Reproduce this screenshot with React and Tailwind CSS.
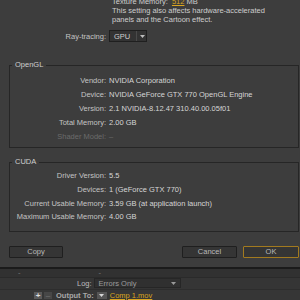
const font = { fontFamily: '"Liberation Sans", Arial, sans-serif' };

function Row({ label, value, dim, h = 'h-[14px]' }) {
  return (
    <div className={`flex items-center ${h}`}>
      <span className={`w-[96px] shrink-0 text-right ${dim ? 'text-[#6b6b6b]' : 'text-[#c4c4c4]'}`}>{label}:</span>
      <span className={`ml-[3px] whitespace-nowrap ${dim ? 'text-[#6b6b6b]' : 'text-[#d6d6d6]'}`}>{value}</span>
    </div>
  );
}

function Group({ title, children, className }) {
  return (
    <div className={`ml-[9px] w-[290px] border border-[#262626] ${className}`}>
      <div className="ml-[2px] -mt-[6px] w-fit bg-[#3d3d3d] px-[3px] leading-[10px] text-[#cfcfcf]">{title}</div>
      {children}
    </div>
  );
}

function Button({ children, ok, className }) {
  return (
    <div
      className={`flex h-[12px] items-center justify-center rounded-[1px] border bg-[#353535] text-[#b9b9b9] ${
        ok ? 'border-[#a27a1f]' : 'border-[#1f1f1f]'
      } ${className}`}
    >
      {children}
    </div>
  );
}

export default function App() {
  return (
    <div className="h-[300px] w-[300px] overflow-hidden bg-[#3d3d3d] text-[7.5px] leading-[9px]" style={font}>
      <div className="flex flex-col">
        <div className="-mt-[3px] ml-[112px] text-[#cdcdcd]">
          <div className="whitespace-nowrap">
            Texture Memory: <span className="ml-[2px] text-[#d9a520] underline">512</span> MB
          </div>
          <div className="whitespace-nowrap">This setting also affects hardware-accelerated</div>
          <div className="whitespace-nowrap">panels and the Cartoon effect.</div>
        </div>

        <div className="mt-[6px] ml-[10px] flex h-[12px] items-center">
          <span className="w-[96px] text-right text-[#c4c4c4]">Ray-tracing:</span>
          <div className="ml-[3px] flex h-[12px] w-[38px] items-center border border-[#1f1f1f] bg-[#333333]">
            <span className="w-[26px] pl-[4px] text-[#cfcfcf]">GPU</span>
            <span className="h-full w-px bg-[#4a4a4a]" />
            <svg width="5" height="3" viewBox="0 0 5 3" className="ml-[3px]">
              <path d="M0 0h5L2.5 3z" fill="#bdbdbd" />
            </svg>
          </div>
        </div>

        <Group title="OpenGL" className="mt-[23px] pb-[4px]">
          <div className="mt-[3px]">
            <Row label="Vendor" value="NVIDIA Corporation" />
            <Row label="Device" value="NVIDIA GeForce GTX 770 OpenGL Engine" />
            <Row label="Version" value="2.1 NVIDIA-8.12.47 310.40.00.05f01" />
            <Row label="Total Memory" value="2.00 GB" />
            <Row label="Shader Model" value="–" dim />
          </div>
        </Group>

        <Group title="CUDA" className="mt-[14px] pb-[7px]">
          <div className="mt-[2px]">
            <Row h="h-[13.7px]" label="Driver Version" value="5.5" />
            <Row h="h-[13.7px]" label="Devices" value="1 (GeForce GTX 770)" />
            <Row h="h-[13.7px]" label="Current Usable Memory" value="3.59 GB (at application launch)" />
            <Row h="h-[13.7px]" label="Maximum Usable Memory" value="4.00 GB" />
          </div>
        </Group>

        <div className="mt-[14px] flex pl-[9px]">
          <Button className="w-[54px]">Copy</Button>
          <Button className="ml-auto w-[55px]">Cancel</Button>
          <Button ok className="ml-[6px] mr-px w-[56px]">OK</Button>
        </div>

        <div className="mt-[9px] h-[2px] bg-[#1b1b1b]" />
        <div className="flex h-[8px] items-center bg-[#313131] text-[#7a7a7a]">
          <span className="ml-[18px]">-</span>
          <span className="ml-[78px]">-</span>
        </div>
        <div className="flex h-[12px] items-center border-t border-[#2a2a2a] bg-[#353535]">
          <span className="ml-[77px] text-[#bdbdbd]">Log:</span>
          <div className="ml-[2px] flex h-[10px] w-[87px] items-center border border-[#262626] bg-[#303030]">
            <span className="pl-[4px] text-[#9c9c9c]">Errors Only</span>
            <svg width="5" height="3" viewBox="0 0 5 3" className="ml-auto mr-[4px]">
              <path d="M0 0h5L2.5 3z" fill="#9a9a9a" />
            </svg>
          </div>
        </div>
        <div className="flex h-[12px] items-center border-t border-[#2d2d2d] bg-[#363636]">
          <div className="ml-[34px] flex h-[7px] w-[8px] items-center justify-center bg-[#5a5a5a] text-[8px] font-bold text-[#e0e0e0]">+</div>
          <div className="ml-[2px] flex h-[7px] w-[8px] items-center justify-center bg-[#474747] text-[8px] text-[#777777]">–</div>
          <span className="ml-[4px] font-bold text-[#a8a8a8]">Output To:</span>
          <div className="ml-[3px] flex h-[7px] w-[10px] items-center justify-center bg-[#555555]">
            <svg width="5" height="3" viewBox="0 0 5 3">
              <path d="M0 0h5L2.5 3z" fill="#d8d8d8" />
            </svg>
          </div>
          <span className="ml-[3px] text-[#d9a520] underline">Comp 1.mov</span>
        </div>
      </div>
    </div>
  );
}
